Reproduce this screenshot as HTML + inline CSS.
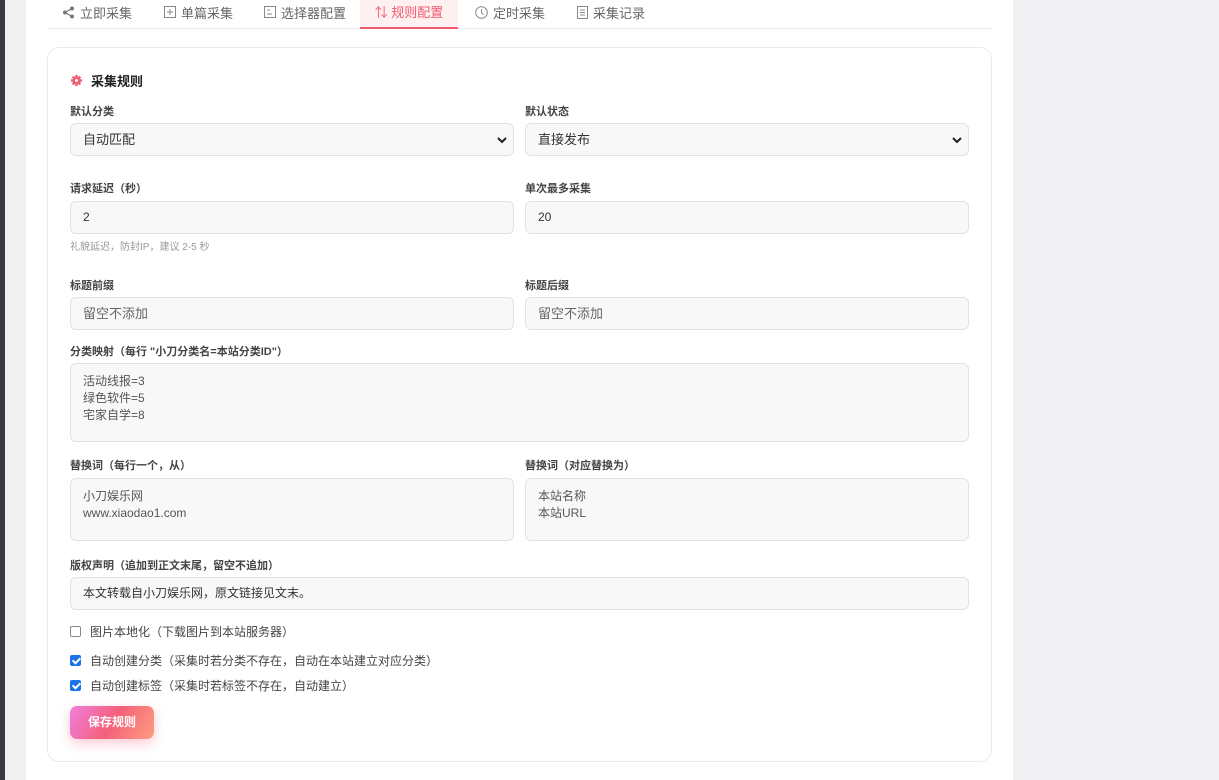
<!DOCTYPE html>
<html><head><meta charset="utf-8"><style>
*{box-sizing:border-box;margin:0;padding:0}
body{width:1219px;height:780px;overflow:hidden;background:#f0f0f3;font-family:"Liberation Sans","Noto Sans CJK SC",sans-serif;position:relative}
.dark{position:absolute;left:0;top:0;width:5px;height:780px;background:#3a3a42}
.main{position:absolute;left:26px;top:0;width:987px;height:780px;background:#fff}
.tabs{position:absolute;left:21px;top:0;width:945px;height:29px;border-bottom:1px solid #e8e8ec}
.tab{position:absolute;top:0;height:29px;font-size:13px;color:#666;display:flex;align-items:center;gap:5px;padding-bottom:5px}
.tab.act{background:#fff1f2;color:#f05a6e;border-bottom:2px solid #f05a6e;justify-content:center}
.card{position:absolute;left:21px;top:47px;width:945px;height:715px;border:1px solid #ebebef;border-radius:12px}
.abs{position:absolute}
.lbl{position:absolute;font-size:11px;color:#444;font-weight:bold}
.inp{position:absolute;height:33px;border:1px solid #e2e2e6;border-radius:6px;background:#f8f8f9;font-size:13px;color:#333;padding-left:12px;line-height:31px}
.ph{color:#666}
.ta{position:absolute;border:1px solid #e2e2e6;border-radius:6px;background:#f8f8f9;font-size:12px;color:#555;padding:9px 12px;line-height:17px}
.chk{position:absolute;font-size:12px;color:#444;display:flex;align-items:center;gap:9px}
.box{width:11px;height:11px;border:1px solid #888;border-radius:2px;background:#fff}
.box.on{background:#1a73e8;border-color:#1a73e8;position:relative}
.box.on:after{content:"";position:absolute;left:3px;top:0px;width:3px;height:6px;border:solid #fff;border-width:0 2px 2px 0;transform:rotate(45deg)}
.arr{position:absolute;right:6px;top:12px}
</style></head><body>
<div class="dark"></div>
<div class="main">
<div class="tabs">
<div class="tab" style="left:15px"><svg width="13" height="13" viewBox="0 0 13 13"><circle cx="3" cy="6.5" r="2" fill="#777"/><circle cx="10" cy="2.5" r="2" fill="#777"/><circle cx="10" cy="10.5" r="2" fill="#777"/><path d="M3 6.5L10 2.5M3 6.5L10 10.5" stroke="#777" stroke-width="1.2"/></svg>立即采集</div>
<div class="tab" style="left:117px"><svg width="12" height="12"><rect x=".5" y=".5" width="11" height="11" fill="none" stroke="#888"/><path d="M6 3v6M3 6h6" stroke="#888"/></svg>单篇采集</div>
<div class="tab" style="left:217px"><svg width="12" height="12"><rect x=".5" y=".5" width="11" height="11" fill="none" stroke="#888"/><path d="M3 4h3M3 8h5" stroke="#888"/></svg>选择器配置</div>
<div class="tab act" style="left:313px;width:98px">⇅ 规则配置</div>
<div class="tab" style="left:428px"><svg width="13" height="13"><circle cx="6.5" cy="6.5" r="5.8" fill="none" stroke="#888"/><path d="M6.5 3v4l2 1.5" stroke="#888" fill="none"/></svg>定时采集</div>
<div class="tab" style="left:530px"><svg width="11" height="13"><rect x=".5" y=".5" width="10" height="12" fill="none" stroke="#888"/><path d="M3 4h5M3 6.5h5M3 9h5" stroke="#888"/></svg>采集记录</div>
</div>
<div class="card">
<div class="abs" style="left:23px;top:23px;font-size:13px;font-weight:bold;color:#222;display:flex;align-items:center;gap:9px"><svg width="11" height="11" viewBox="0 0 12 12"><g stroke="#f05a6e" stroke-width="2.6"><path d="M6 0v12M0 6h12M1.8 1.8l8.4 8.4M10.2 1.8l-8.4 8.4"/></g><circle cx="6" cy="6" r="3.6" fill="#f05a6e"/><circle cx="6" cy="6" r="1.6" fill="#fff"/></svg>采集规则</div>
<div class="lbl" style="left:22px;top:55px">默认分类</div>
<div class="lbl" style="left:477px;top:55px">默认状态</div>
<div class="inp" style="left:22px;top:75px;width:444px">自动匹配<svg class="arr" width="10" height="8"><path d="M1 2l4 4 4-4" stroke="#222" stroke-width="2" fill="none"/></svg></div>
<div class="inp" style="left:477px;top:75px;width:444px">直接发布<svg class="arr" width="10" height="8"><path d="M1 2l4 4 4-4" stroke="#222" stroke-width="2" fill="none"/></svg></div>
<div class="lbl" style="left:22px;top:132px">请求延迟（秒）</div>
<div class="lbl" style="left:477px;top:132px">单次最多采集</div>
<div class="inp" style="left:22px;top:153px;width:444px;font-size:12px">2</div>
<div class="inp" style="left:477px;top:153px;width:444px;font-size:12px">20</div>
<div class="abs" style="left:22px;top:190px;font-size:10px;color:#999">礼貌延迟，防封IP，建议 2-5 秒</div>
<div class="lbl" style="left:22px;top:229px">标题前缀</div>
<div class="lbl" style="left:477px;top:229px">标题后缀</div>
<div class="inp ph" style="left:22px;top:249px;width:444px">留空不添加</div>
<div class="inp ph" style="left:477px;top:249px;width:444px">留空不添加</div>
<div class="lbl" style="left:22px;top:295px">分类映射（每行 "小刀分类名=本站分类ID"）</div>
<div class="ta" style="left:22px;top:315px;width:899px;height:79px">活动线报=3<br>绿色软件=5<br>宅家自学=8</div>
<div class="lbl" style="left:22px;top:409px">替换词（每行一个，从）</div>
<div class="lbl" style="left:477px;top:409px">替换词（对应替换为）</div>
<div class="ta" style="left:22px;top:430px;width:444px;height:63px">小刀娱乐网<br>www.xiaodao1.com</div>
<div class="ta" style="left:477px;top:430px;width:444px;height:63px">本站名称<br>本站URL</div>
<div class="lbl" style="left:22px;top:509px">版权声明（追加到正文末尾，留空不追加）</div>
<div class="inp" style="left:22px;top:529px;width:899px;font-size:12px">本文转载自小刀娱乐网，原文链接见文末。</div>
<div class="chk" style="left:22px;top:575px"><div class="box"></div>图片本地化（下载图片到本站服务器）</div>
<div class="chk" style="left:22px;top:604px"><div class="box on"></div>自动创建分类（采集时若分类不存在，自动在本站建立对应分类）</div>
<div class="chk" style="left:22px;top:629px"><div class="box on"></div>自动创建标签（采集时若标签不存在，自动建立）</div>
<div class="abs" style="left:22px;top:658px;width:84px;height:33px;border-radius:7px;background:linear-gradient(120deg,#f07ee0,#f6607a 50%,#fe9e80);color:#fff;font-size:12px;font-weight:bold;text-align:center;line-height:33px;box-shadow:0 4px 12px rgba(246,96,122,.35)">保存规则</div>
</div>
</div>
</body></html>
